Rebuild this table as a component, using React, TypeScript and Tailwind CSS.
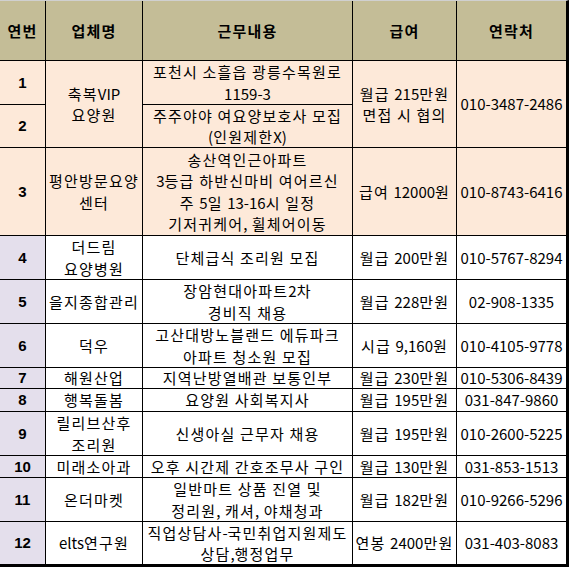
const rows = [
  { no: "4", name: ["더드림", "요양병원"], job: ["단체급식 조리원 모집"], pay: "월급 200만원", tel: "010-5767-8294" },
  { no: "5", name: ["을지종합관리"], job: ["장암현대아파트2차", "경비직 채용"], pay: "월급 228만원", tel: "02-908-1335" },
  { no: "6", name: ["덕우"], job: ["고산대방노블랜드 에듀파크", "아파트 청소원 모집"], pay: "시급 9,160원", tel: "010-4105-9778" },
  { no: "7", name: ["해원산업"], job: ["지역난방열배관 보통인부"], pay: "월급 230만원", tel: "010-5306-8439" },
  { no: "8", name: ["행복돌봄"], job: ["요양원 사회복지사"], pay: "월급 195만원", tel: "031-847-9860" },
  { no: "9", name: ["릴리브산후", "조리원"], job: ["신생아실 근무자 채용"], pay: "월급 195만원", tel: "010-2600-5225" },
  { no: "10", name: ["미래소아과"], job: ["오후 시간제 간호조무사 구인"], pay: "월급 130만원", tel: "031-853-1513" },
  { no: "11", name: ["온더마켓"], job: ["일반마트 상품 진열 및", "정리원, 캐셔, 야채청과"], pay: "월급 182만원", tel: "010-9266-5296" },
  { no: "12", name: ["elts연구원"], job: ["직업상담사-국민취업지원제도", "상담,행정업무"], pay: "연봉 2400만원", tel: "031-403-8083" },
];

// Hangul in the sheet font runs wider than Noto CJK, digits don't: widen only the Hangul runs
function Txt({ t }: { t: string }) {
  const parts = t.split(/([\uAC00-\uD7A3 ]+)/).filter(Boolean);
  return (
    <>
      {parts.map((p, i) =>
        /[\uAC00-\uD7A3]/.test(p) ? (
          <span key={i} className="tracking-[1.2px]">{p}</span>
        ) : (
          <span key={i}>{p}</span>
        )
      )}
    </>
  );
}

function Cell({ className = "", children }: { className?: string; children: React.ReactNode }) {
  return (
    <div className={`flex flex-col items-center justify-center text-center whitespace-nowrap overflow-visible ${className}`}>
      {children}
    </div>
  );
}

function Lines({ items }: { items: string[] }) {
  return (
    <>
      {items.map((t) => (
        <span key={t} className="block">
          <Txt t={t} />
        </span>
      ))}
    </>
  );
}

function Num({ n, className }: { n: string; className: string }) {
  return (
    <Cell className={`font-bold font-['Liberation_Sans',Arial,sans-serif] ${className}`}>{n}</Cell>
  );
}

export default function App() {
  const peach = "bg-[#fde9d9]";
  return (
    <div className="w-[569px] h-[567px] bg-white border-t border-[#d0d0d0] border-r-[3px] border-b-[3px] border-r-black border-b-black font-['Noto_Sans_CJK_KR','Noto_Sans',sans-serif] text-[15px] leading-[21.5px] text-black">
      <div className="grid bg-black gap-px grid-cols-[45px_96px_209px_103px_109px] grid-rows-[59px_43px_42px_87px_43px_43px_43px_20px_22px_43px_21px_43px_42px] h-[563px]">
        {["연번", "업체명", "근무내용", "급여", "연락처"].map((h) => (
          <Cell key={h} className="bg-[#c4bd97] font-bold">
            <Txt t={h} />
          </Cell>
        ))}

        <Num n="1" className={peach} />
        <Cell className={`${peach} row-span-2`}>
          <Lines items={["축복VIP", "요양원"]} />
        </Cell>
        <Cell className={peach}>
          <Lines items={["포천시 소흘읍 광릉수목원로", "1159-3"]} />
        </Cell>
        <Cell className={`${peach} row-span-2`}>
          <Lines items={["월급 215만원", "면접 시 협의"]} />
        </Cell>
        <Cell className={`${peach} row-span-2`}>010-3487-2486</Cell>

        <Num n="2" className={peach} />
        <Cell className={peach}>
          <Lines items={["주주야야 여요양보호사 모집", "(인원제한X)"]} />
        </Cell>

        <Num n="3" className={peach} />
        <Cell className={peach}>
          <Lines items={["평안방문요양", "센터"]} />
        </Cell>
        <Cell className={peach}>
          <Lines items={["송산역인근아파트", "3등급 하반신마비 여어르신", "주 5일 13-16시 일정", "기저귀케어, 휠체어이동"]} />
        </Cell>
        <Cell className={peach}>
          <Lines items={["급여 12000원"]} />
        </Cell>
        <Cell className={peach}>010-8743-6416</Cell>

        {rows.map((r) => (
          <div key={r.no} className="contents">
            <Num n={r.no} className="bg-[#e4dfec]" />
            <Cell className="bg-white">
              <Lines items={r.name} />
            </Cell>
            <Cell className="bg-white">
              <Lines items={r.job} />
            </Cell>
            <Cell className="bg-white">
              <Lines items={[r.pay]} />
            </Cell>
            <Cell className="bg-white">{r.tel}</Cell>
          </div>
        ))}
      </div>
    </div>
  );
}
